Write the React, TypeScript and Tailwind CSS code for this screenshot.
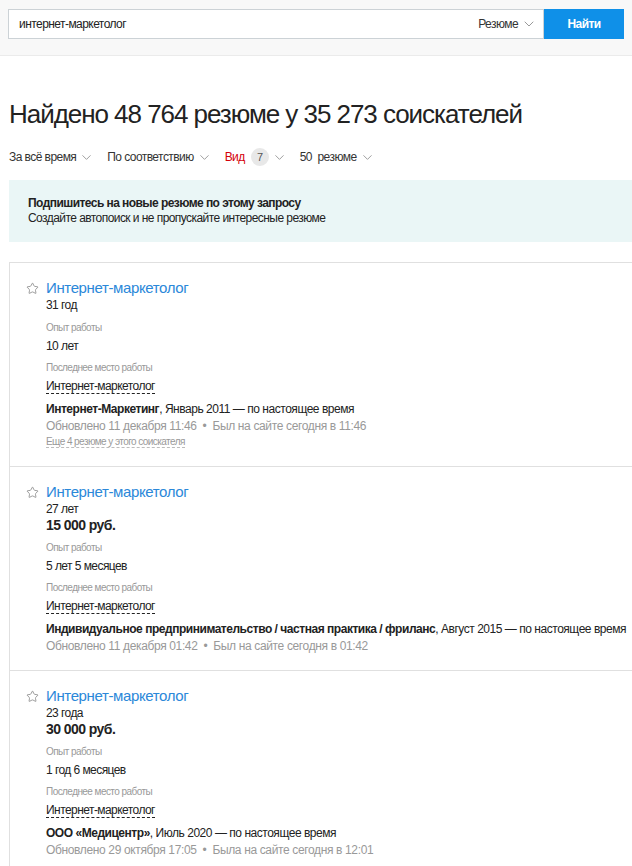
import { Star, ChevronDown } from "lucide-react";

type Resume = {
  age: string;
  salary?: string;
  experience: string;
  company: string;
  period: string;
  updated: string;
  seen: string;
  more?: string;
};

const resumes: Resume[] = [
  {
    age: "31 год",
    experience: "10 лет",
    company: "Интернет-Маркетинг",
    period: "Январь 2011 — по настоящее время",
    updated: "Обновлено 11 декабря 11:46",
    seen: "Был на сайте сегодня в 11:46",
    more: "Еще 4 резюме у этого соискателя",
  },
  {
    age: "27 лет",
    salary: "15 000 руб.",
    experience: "5 лет 5 месяцев",
    company: "Индивидуальное предпринимательство / частная практика / фриланс",
    period: "Август 2015 — по настоящее время",
    updated: "Обновлено 11 декабря 01:42",
    seen: "Был на сайте сегодня в 01:42",
  },
  {
    age: "23 года",
    salary: "30 000 руб.",
    experience: "1 год 6 месяцев",
    company: "ООО «Медицентр»",
    period: "Июль 2020 — по настоящее время",
    updated: "Обновлено 29 октября 17:05",
    seen: "Была на сайте сегодня в 12:01",
  },
];

function Filter({ label }: { label: string }) {
  return (
    <div className="flex items-center gap-[3px] text-[12px] text-[#333]">
      <span className="whitespace-pre">{label}</span>
      <ChevronDown className="w-[15px] h-[15px] text-[#999]" strokeWidth={1.5} />
    </div>
  );
}

function ResumeCard({ r }: { r: Resume }) {
  return (
    <div className="border-b border-[#e0e0e0] pl-[16px] pt-[15px] pb-[16px]">
      <div className="flex items-start">
        <Star className="w-[13px] h-[13px] mt-[4px] mr-[7px] text-[#888]" strokeWidth={1.5} />
        <div className="flex flex-col">
          <a className="text-[15px] leading-[20px] text-[#2b88d9] tracking-[-0.025em] cursor-pointer">
            Интернет-маркетолог
          </a>
          <div className="text-[12px] leading-[15px] text-[#222]">{r.age}</div>
          {r.salary && (
            <div className="text-[14px] leading-[16px] font-bold text-[#222]">{r.salary}</div>
          )}
          <div className="mt-[8px] text-[10px] leading-[13px] text-[#999]">Опыт работы</div>
          <div className="mt-[4px] text-[12px] leading-[16px] text-[#222]">{r.experience}</div>
          <div className="mt-[7px] text-[10px] leading-[13px] text-[#999]">
            Последнее место работы
          </div>
          <div className="mt-[4px] text-[12px] leading-[16px] text-[#222]">
            <span className="border-b border-dashed border-[#222]">Интернет-маркетолог</span>
          </div>
          <div className="mt-[7px] text-[12px] leading-[16px] text-[#222] whitespace-nowrap tracking-[-0.039em]">
            <span className="font-bold">{r.company}</span>, {r.period}
          </div>
          <div className="mt-[1px] text-[12px] leading-[16px] text-[#999] whitespace-nowrap tracking-[-0.03em]">
            {r.updated}
            <span className="mx-[6px]">•</span>
            {r.seen}
          </div>
          {r.more && (
            <div className="text-[10px] leading-[16px] text-[#999]">
              <span className="border-b border-dashed border-[#bbb]">{r.more}</span>
            </div>
          )}
        </div>
      </div>
    </div>
  );
}

export default function App() {
  return (
    <div className="w-[632px] h-[866px] overflow-hidden bg-white font-['Liberation_Sans',Arial,sans-serif] tracking-[-0.035em]">
      <div className="bg-[#f8f8f8] border-b border-[#ebebeb] pt-[9px] pb-[16px] px-[8px]">
        <div className="flex h-[30px]">
          <div className="flex-1 flex items-center bg-white border border-[#ccd2d6] pl-[10px] pr-[6px]">
            <span className="flex-1 text-[12px] text-[#222]">интернет-маркетолог</span>
            <span className="text-[12px] text-[#333]">Резюме</span>
            <ChevronDown className="w-[16px] h-[16px] ml-[3px] text-[#999]" strokeWidth={1.5} />
          </div>
          <button className="w-[80px] bg-[#0f90e8] text-white text-[12px] font-bold">
            Найти
          </button>
        </div>
      </div>

      <div className="pl-[9px]">
        <h1 className="mt-[42px] text-[26px] leading-[32px] text-[#222] tracking-[-0.04em]">
          Найдено 48 764 резюме у 35 273 соискателей
        </h1>

        <div className="mt-[18px] flex items-center gap-[13px]">
          <Filter label="За всё время" />
          <Filter label="По соответствию" />
          <div className="flex items-center gap-[3px] text-[12px]">
            <span className="text-[#d4000a]">Вид</span>
            <span className="ml-[3px] w-[18px] h-[18px] rounded-full bg-[#e8e8e8] text-[#555] flex items-center justify-center text-[11px]">
              7
            </span>
            <ChevronDown className="w-[15px] h-[15px] text-[#999]" strokeWidth={1.5} />
          </div>
          <Filter label="50  резюме" />
        </div>

        <div className="mt-[14px] bg-[#eaf6f6] h-[62px] pl-[19px] flex flex-col justify-center w-[660px]">
          <div className="text-[12px] leading-[15px] font-bold text-[#222]">
            Подпишитесь на новые резюме по этому запросу
          </div>
          <div className="text-[12px] leading-[15px] text-[#222]">
            Создайте автопоиск и не пропускайте интересные резюме
          </div>
        </div>

        <div className="mt-[20px] border-l border-t border-[#e0e0e0] w-[700px]">
          {resumes.map((r, i) => (
            <ResumeCard key={i} r={r} />
          ))}
        </div>
      </div>
    </div>
  );
}
